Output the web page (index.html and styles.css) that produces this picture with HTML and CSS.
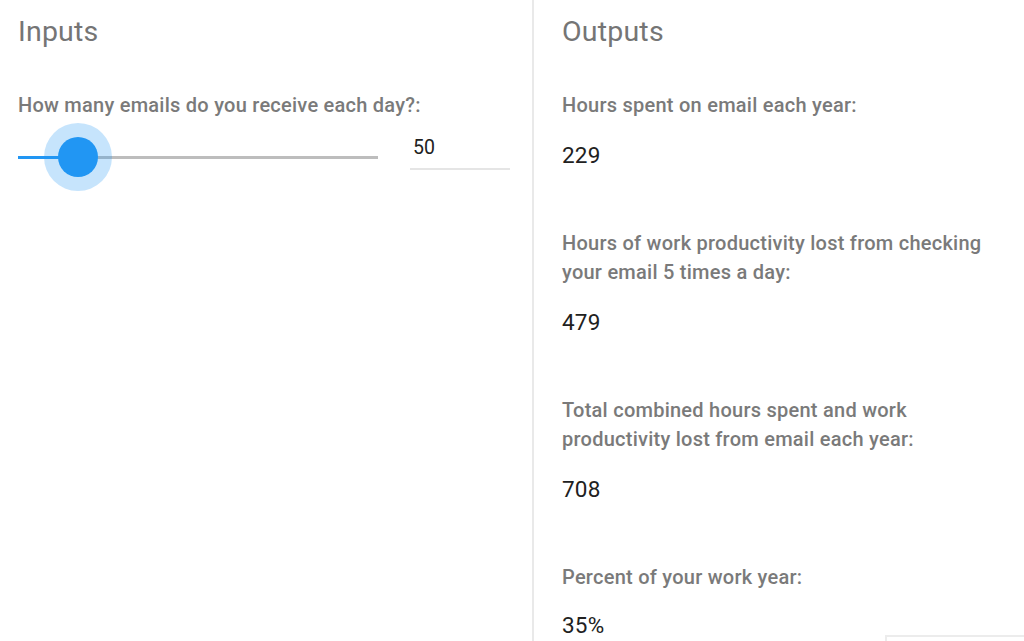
FILE: index.html
```html
<!DOCTYPE html>
<html>
<head>
<meta charset="utf-8">
<link rel="stylesheet" href="styles.css">
</head>
<body>
<div class="page">
  <section class="col inputs">
    <h2 class="title">Inputs</h2>
    <div class="field">
      <div class="label">How many emails do you receive each day?:</div>
      <div class="control">
        <div class="slider">
          <div class="track"></div>
          <div class="fill"></div>
          <div class="halo"></div>
          <div class="thumb"></div>
        </div>
        <div class="numbox"><span class="num">50</span></div>
      </div>
    </div>
  </section>
  <div class="divider"></div>
  <section class="col outputs">
    <h2 class="title">Outputs</h2>
    <div class="out">
      <div class="label">Hours spent on email each year:</div>
      <div class="value">229</div>
    </div>
    <div class="out">
      <div class="label">Hours of work productivity lost from checking your email 5 times a day:</div>
      <div class="value">479</div>
    </div>
    <div class="out">
      <div class="label">Total combined hours spent and work productivity lost from email each year:</div>
      <div class="value">708</div>
    </div>
    <div class="out">
      <div class="label">Percent of your work year:</div>
      <div class="value">35%</div>
    </div>
  </section>
</div>
<div class="corner"></div>
</body>
</html>
```
FILE: styles.css
```css
html, body {
  margin: 0;
  padding: 0;
  background: #ffffff;
  font-family: Roboto, "Liberation Sans", sans-serif;
  overflow: hidden;
  height: 641px;
}
.page {
  display: flex;
  height: 641px;
}
.col {
  box-sizing: border-box;
}
.inputs {
  width: 532px;
  padding: 0 22px 0 18px;
}
.outputs {
  flex: 1;
  padding: 0 30px 0 28px;
}
.divider {
  width: 2px;
  background: #e9e9e9;
}
.title {
  margin: 0;
  padding-top: 15px;
  font-size: 28.5px;
  font-weight: 400;
  line-height: 34px;
  color: #757575;
  letter-spacing: 0.2px;
}
.label {
  font-size: 20px;
  font-weight: 500;
  color: #7a7a7a;
  line-height: 29px;
  letter-spacing: 0.25px;
}
.field {
  margin-top: 42px;
}
.control {
  display: flex;
  align-items: flex-start;
  margin-top: 13px;
}
.slider {
  position: relative;
  width: 360px;
  height: 48px;
}
.track {
  position: absolute;
  left: 0;
  right: 0;
  top: 23px;
  height: 3px;
  background: #bdbdbd;
}
.fill {
  position: absolute;
  left: 0;
  width: 60px;
  top: 23px;
  height: 3px;
  background: #2196f3;
}
.halo {
  position: absolute;
  left: 26px;
  top: -10px;
  width: 68px;
  height: 68px;
  border-radius: 50%;
  background: rgba(33, 150, 243, 0.26);
}
.thumb {
  position: absolute;
  left: 40px;
  top: 4px;
  width: 40px;
  height: 40px;
  border-radius: 50%;
  background: #2196f3;
}
.numbox {
  margin-left: 32px;
  width: 100px;
  height: 37px;
  border-bottom: 2px solid #e5e5e5;
  box-sizing: content-box;
  margin-top: -2px;
}
.num {
  display: block;
  padding-left: 3px;
  font-size: 19.5px;
  line-height: 33px;
  color: #212121;
}
.out {
  margin-top: 42px;
}
.out + .out {
  margin-top: 59px;
}
.value {
  margin-top: 20px;
  font-size: 22.5px;
  line-height: 30px;
  color: #212121;
  letter-spacing: 0.2px;
}
.out:last-child .value {
  margin-top: 18px;
}
.corner {
  position: absolute;
  left: 885px;
  top: 635px;
  width: 138px;
  height: 20px;
  border: 2px solid #ececec;
  border-right: none;
  background: #fff;
}
```
